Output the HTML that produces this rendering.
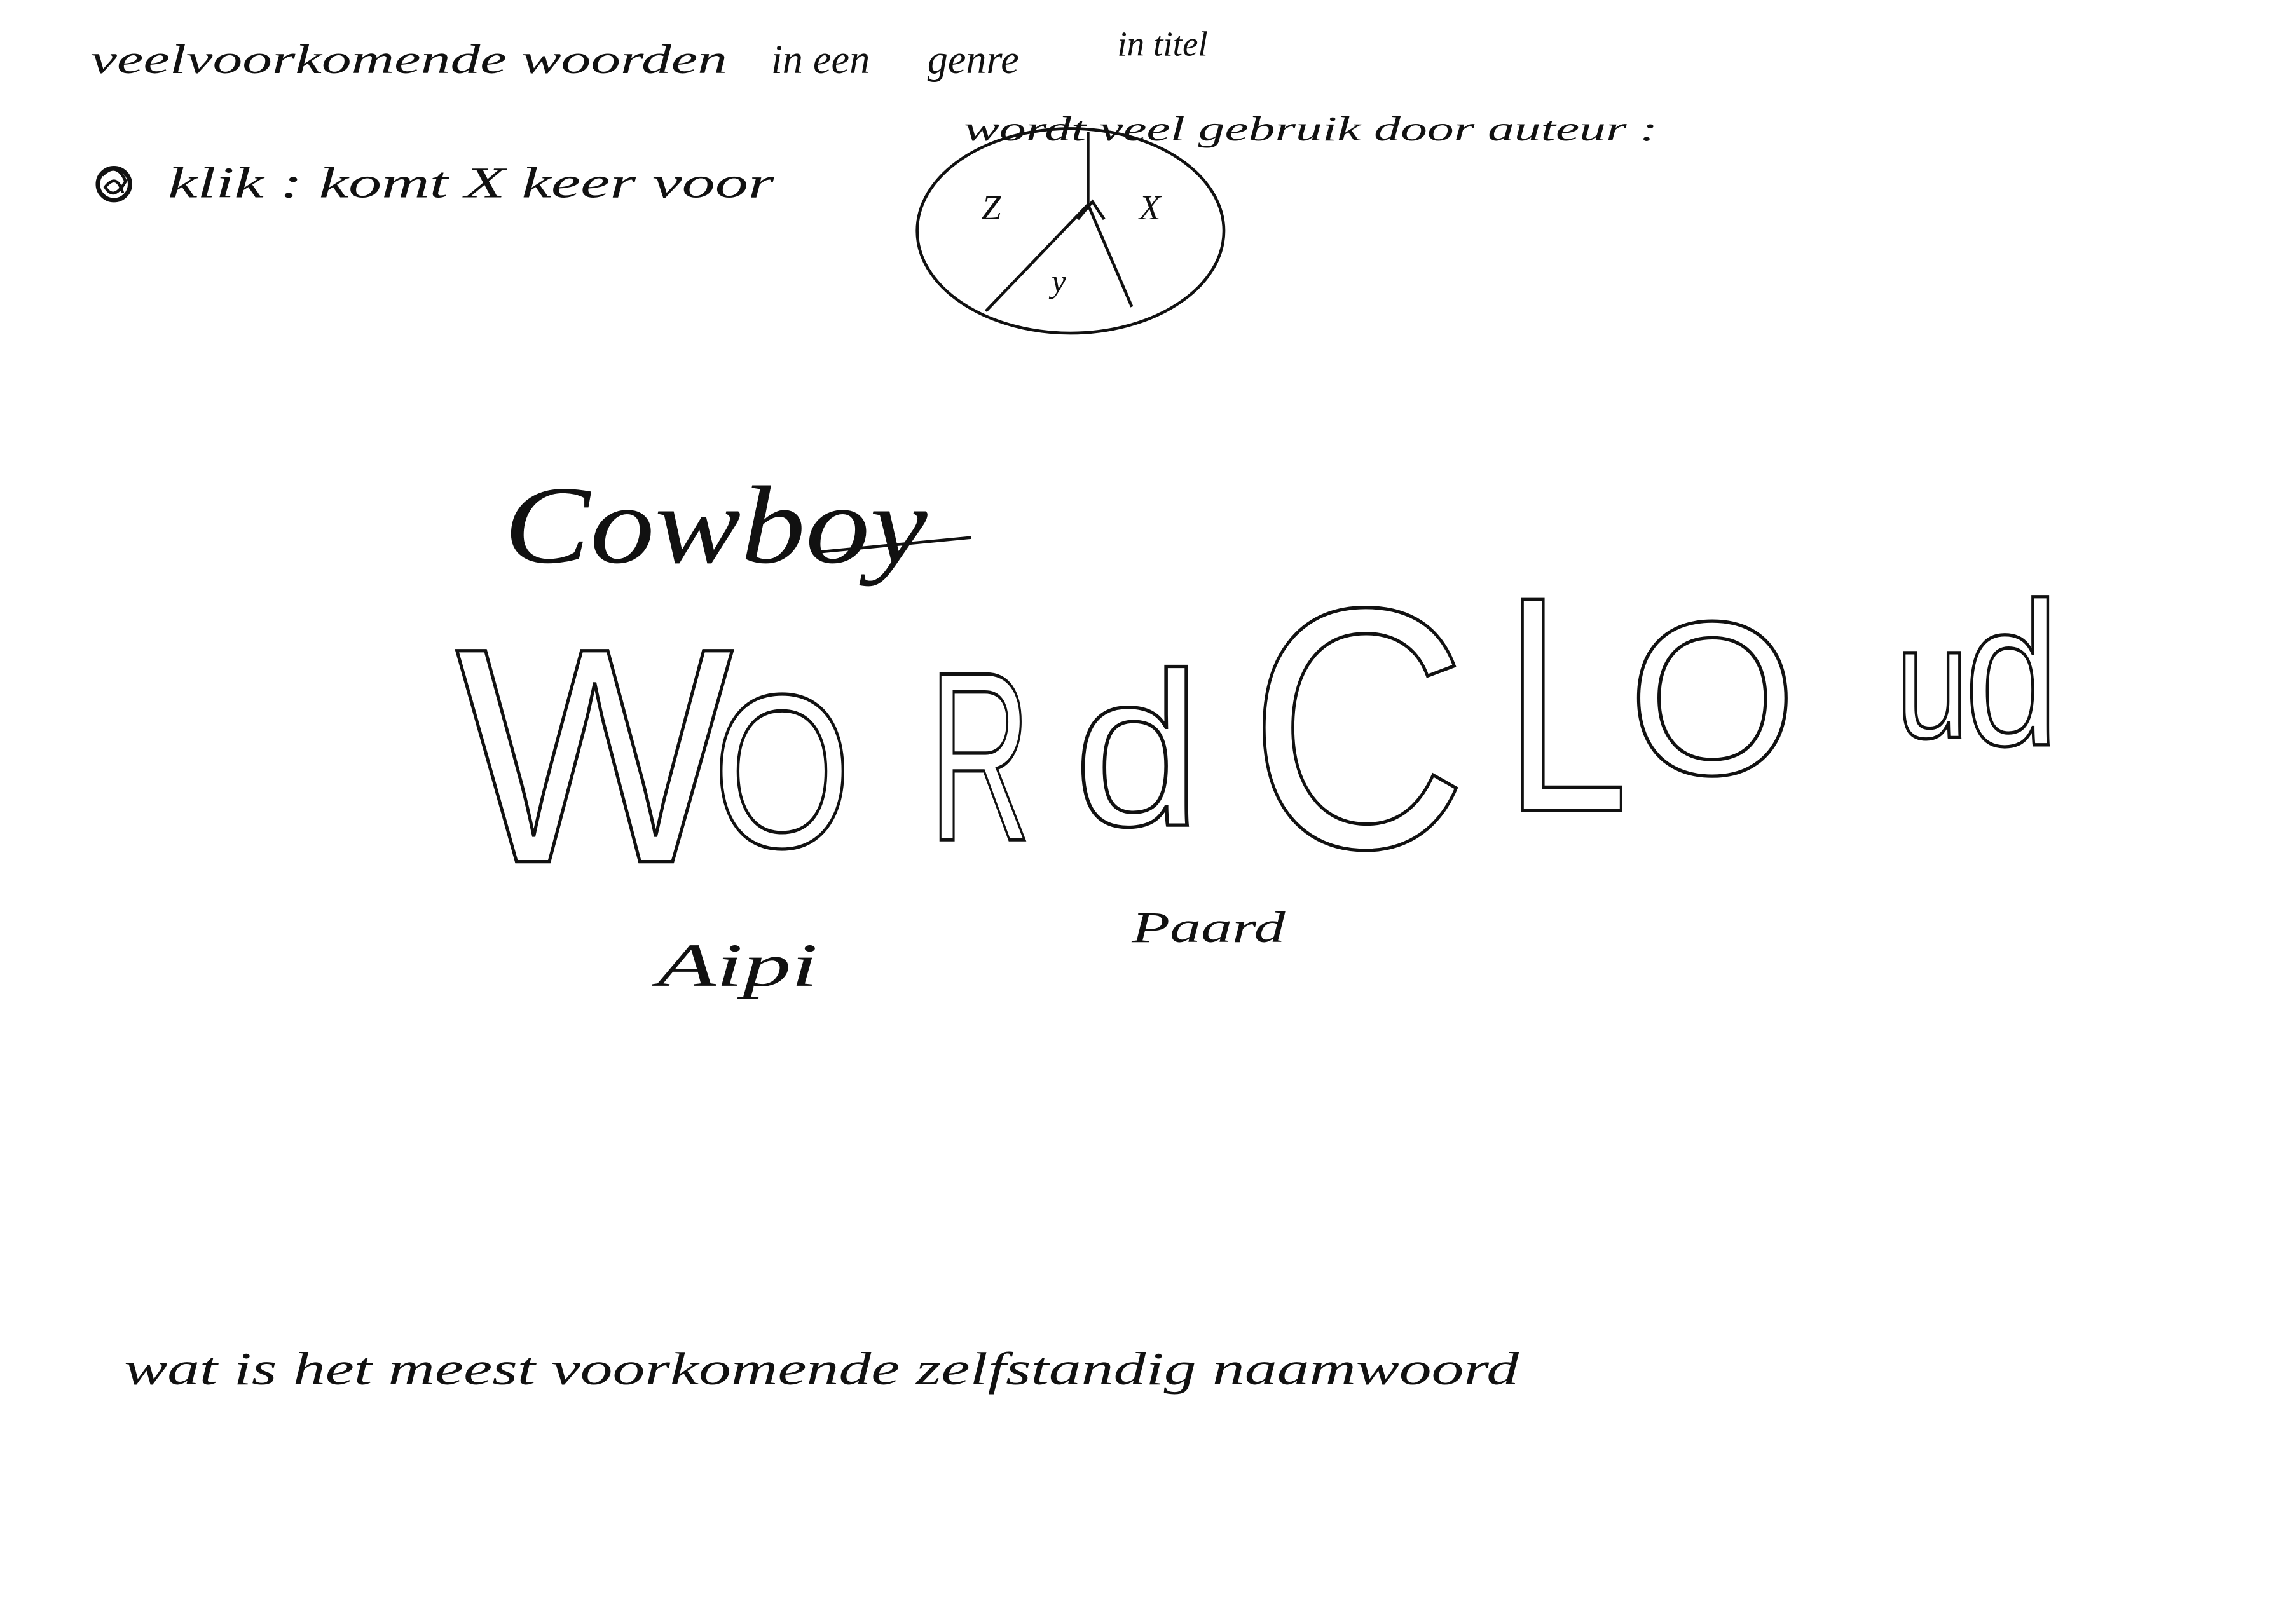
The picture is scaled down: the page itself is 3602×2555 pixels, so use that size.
<!DOCTYPE html>
<html><head><meta charset="utf-8"><style>
html,body{margin:0;padding:0;background:#fff;}
svg{display:block;}
.h{font-family:"Liberation Serif",serif;font-style:italic;fill:#111;}
.o{font-family:"Liberation Sans",sans-serif;fill:none;stroke:#111;stroke-width:2.3;}
</style></head><body>
<svg width="3602" height="2555" viewBox="0 0 1568 1112" xmlns="http://www.w3.org/2000/svg">
<rect width="1568" height="1112" fill="#fff"/>
<text class="h" x="62" y="50" font-size="28" textLength="436" lengthAdjust="spacingAndGlyphs">veelvoorkomende woorden</text>
<text class="h" x="528" y="50" font-size="28">in  een</text>
<text class="h" x="635" y="50" font-size="28">genre</text>
<text class="h" x="765" y="38" font-size="24">in  titel</text>
<text class="h" x="660" y="96" font-size="24" textLength="475" lengthAdjust="spacingAndGlyphs">wordt veel gebruik door auteur :</text>
<circle cx="78" cy="126" r="11" fill="none" stroke="#111" stroke-width="3"/>
<path d="M70 120 Q80 110 86 124 Q78 138 72 128 Q80 118 84 132" fill="none" stroke="#111" stroke-width="2"/>
<text class="h" x="115" y="135" font-size="30" textLength="415" lengthAdjust="spacingAndGlyphs">klik :  komt  X  keer  voor</text>
<ellipse cx="733" cy="158" rx="105" ry="70" fill="none" stroke="#111" stroke-width="2"/>
<path d="M745 90 L745 140 L675 213 M745 140 L775 210 M738 150 L748 138 L756 150" fill="none" stroke="#111" stroke-width="2"/>
<text class="h" x="672" y="150" font-size="24" font-style="normal">Z</text>
<text class="h" x="780" y="150" font-size="24">X</text>
<text class="h" x="720" y="200" font-size="22">y</text>
<text class="h" x="345" y="385" font-size="76" textLength="290" lengthAdjust="spacingAndGlyphs">Cowboy</text>
<path d="M560 378 L665 368" stroke="#111" stroke-width="2"/>
<text class="o" x="312" y="590" font-size="210" textLength="190" lengthAdjust="spacingAndGlyphs">W</text>
<text class="o" x="488" y="580" font-size="150" textLength="95" lengthAdjust="spacingAndGlyphs">O</text>
<text class="o" x="636" y="575" font-size="165" textLength="70" lengthAdjust="spacingAndGlyphs">R</text>
<text class="o" x="735" y="565" font-size="150" textLength="88" lengthAdjust="spacingAndGlyphs">d</text>
<text class="o" x="855" y="580" font-size="235" textLength="150" lengthAdjust="spacingAndGlyphs">C</text>
<text class="o" x="1030" y="555" font-size="210" textLength="85" lengthAdjust="spacingAndGlyphs">L</text>
<text class="o" x="1115" y="530" font-size="150" textLength="115" lengthAdjust="spacingAndGlyphs">O</text>
<text class="o" x="1298" y="505" font-size="110" textLength="50" lengthAdjust="spacingAndGlyphs">u</text>
<text class="o" x="1345" y="510" font-size="140" textLength="65" lengthAdjust="spacingAndGlyphs">d</text>
<text class="h" x="450" y="675" font-size="42" textLength="110" lengthAdjust="spacingAndGlyphs">Aipi</text>
<text class="h" x="775" y="645" font-size="30" textLength="105" lengthAdjust="spacingAndGlyphs">Paard</text>
<text class="h" x="85" y="948" font-size="32" textLength="955" lengthAdjust="spacingAndGlyphs">wat is het meest voorkomende zelfstandig naamwoord</text>
</svg>
</body></html>
